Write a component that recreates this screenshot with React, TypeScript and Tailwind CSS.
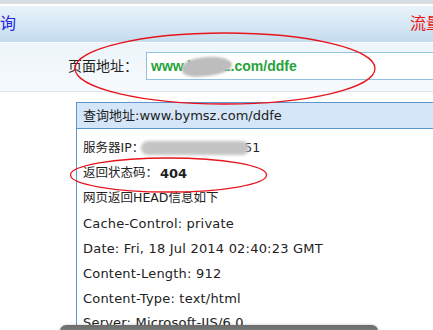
import React from "react";

const cjk = '"DejaVu Sans", "Noto Sans CJK SC", sans-serif';

export default function App() {
  return (
    <div
      className="relative w-[433px] h-[330px] overflow-hidden bg-white text-[#222]"
      style={{ fontFamily: cjk }}
    >
      <div className="h-[4px] bg-[#d9dee3]" />
      <div className="h-[2px] bg-white" />
      <div className="h-[36px] bg-gradient-to-b from-[#e9f3fa] to-[#c5dcee] flex items-center justify-between">
        <span className="ml-[-16px] text-[16px] text-[#2424e6] leading-none">查询</span>
        <span className="mr-[-9px] text-[16px] text-[#f01010] leading-none">流量</span>
      </div>
      <div className="h-[1px] bg-white" />
      <div className="h-[48px] bg-gradient-to-b from-[#edf5fa] to-[#f6fafd] flex items-start">
        <div className="ml-[68px] mt-[16px] text-[14px] leading-none text-[#222]">页面地址：</div>
        <div className="relative ml-[8px] mt-[9px] h-[28px] flex-1 mr-[-20px] border border-[#8fc1e0] bg-white flex items-center pl-[4px]">
          <span
            className="text-[14px] font-bold text-[#26a33a]"
            style={{ fontFamily: '"Liberation Sans", Arial, sans-serif' }}
          >
            www.bymsz.com/ddfe
          </span>
          <div className="absolute left-[35px] top-[4px] w-[50px] h-[19px] bg-[#bdbdbd] rounded-[45%_55%_50%_40%] blur-[1px] rotate-[-6deg]" />
        </div>
      </div>
      <div className="h-[1px] bg-[#dbe7ee]" />
      <div className="pt-[10px] pl-[76px]">
        <div className="border border-[#5b96cc] border-r-0 border-b-0">
          <div className="h-[26px] bg-[#d4e6f8] border-b border-[#5b96cc] flex items-center pl-[6px] text-[13px]">
            查询地址:www.bymsz.com/ddfe
          </div>
          <div className="pt-[7px] pl-[6px] text-[12.5px]">
            <div className="relative h-[25px] flex items-center">
              <span>服务器IP：</span>
              <span className="ml-[100px]">51</span>
              <div className="absolute left-[58px] top-[5px] w-[108px] h-[14px] bg-[#c4c4c4] rounded-full blur-[1.5px]" />
            </div>
            <div className="h-[25px] flex items-center">
              返回状态码：<span className="font-bold ml-[2px] text-[13px]">404</span>
            </div>
            <div className="h-[25px] flex items-center">网页返回HEAD信息如下</div>
            <div className="h-[25px] flex items-center text-[13px] tracking-[0.2px]">Cache-Control: private</div>
            <div className="h-[25px] flex items-center text-[13px] tracking-[0.2px]">Date: Fri, 18 Jul 2014 02:40:23 GMT</div>
            <div className="h-[25px] flex items-center text-[13px] tracking-[0.2px]">Content-Length: 912</div>
            <div className="h-[25px] flex items-center text-[13px] tracking-[0.2px]">Content-Type: text/html</div>
            <div className="h-[24px] flex items-center text-[13px] tracking-[0.2px]">Server: Microsoft-IIS/6.0</div>
          </div>
        </div>
      </div>

      <svg
        className="absolute left-0 top-0 pointer-events-none"
        width="433"
        height="330"
        viewBox="0 0 433 330"
      >
        <ellipse cx="225" cy="68.5" rx="150" ry="35.5" fill="none" stroke="#e8141c" strokeWidth="1.3" />
        <ellipse cx="168.5" cy="175" rx="98" ry="17" fill="none" stroke="#e8141c" strokeWidth="1.3" />
      </svg>

      <div className="absolute left-[60px] top-[325px] w-[318px] h-[10px] rounded-t-[6px] bg-gradient-to-b from-[#6c6c6c] to-[#858585] shadow-[0_0_3px_rgba(0,0,0,0.25)]" />
    </div>
  );
}
